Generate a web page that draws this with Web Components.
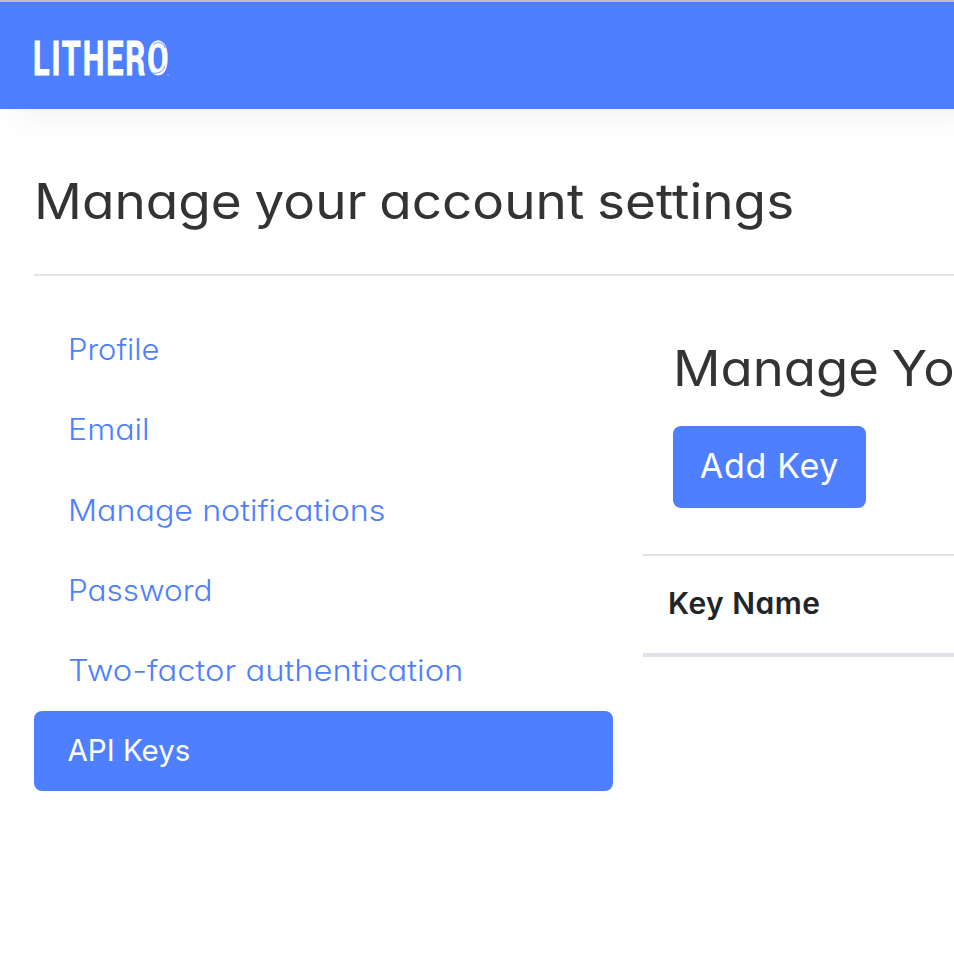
<!DOCTYPE html>
<html lang="en">
<head>
<meta charset="utf-8">
<title>Account settings</title>
<style>
	html, body{
		margin: 0;
		height: 100%;
		overflow: hidden;
		background: #fff;
	}
	body{
		font-family: Inter, "Open Sans", "Liberation Sans", sans-serif;
		font-feature-settings: "cv11", "ss03";
		color: #333;
		--brand: #4d7fff;
		--line: #dee2e6;
	}
</style>
</head>
<body>
<settings-page>
	<brand-header slot="header">LITHERO</brand-header>
	<page-title slot="title">Manage your account settings</page-title>
	<side-nav slot="nav">
		<nav-item style="--stretch: 1.05">Profile</nav-item>
		<nav-item style="--stretch: 1.09">Email</nav-item>
		<nav-item style="--stretch: 1.094">Manage notifications</nav-item>
		<nav-item style="--stretch: 1.067">Password</nav-item>
		<nav-item style="--stretch: 1.11">Two-factor authentication</nav-item>
		<nav-item active>API Keys</nav-item>
	</side-nav>
	<key-panel heading="Manage Yo">
		<add-button slot="action">Add Key</add-button>
		<key-table>Key Name</key-table>
	</key-panel>
</settings-page>

<script>
class BaseElement extends HTMLElement {

	constructor(){
		super();
		this.shadow = this.attachShadow({mode : 'open'});
	}

	connectedCallback(){
		this.shadow.innerHTML = this.render();
	}
}

class SettingsPage extends BaseElement {

	render(){
		return `
			<style>
				:host{
					display: flex;
					flex-direction: column;
					height: 100%;
				}
				.heading{
					margin-left: 34px;
					height: 165px;
					border-bottom: 2px solid #e4e4e4;
				}
				.columns{
					display: grid;
					grid-template-columns: 579px 1fr;
					column-gap: 30px;
					padding: 34px 0 0 34px;
				}
			</style>
			<slot name="header"></slot>
			<div class="heading"><slot name="title"></slot></div>
			<div class="columns">
				<slot name="nav"></slot>
				<slot></slot>
			</div>
		`;
	}
}

class BrandHeader extends BaseElement {

	render(){
		return `
			<style>
				:host{
					display: flex;
					align-items: flex-start;
					box-sizing: border-box;
					flex: none;
					height: 109px;
					padding: 27px 33px 0;
					border-top: 2px solid #bfbfbf;
					background: var(--brand);
					box-shadow: 16px 8px 32px rgba(0, 0, 0, 0.06);
				}
				.logo{
					position: relative;
					color: #fff;
					font-family: Roboto, sans-serif;
					font-weight: 700;
					font-size: 49px;
					line-height: 59px;
				}
				.word{
					display: block;
					letter-spacing: 3px;
					-webkit-text-stroke: 1px #fff;
					transform: scaleX(0.625);
					transform-origin: left;
				}
				svg{
					position: absolute;
					left: 111.5px;
					top: 7px;
				}
			</style>
			<div class="logo">
				<span class="word"><slot></slot></span>
				<!-- cuts in the ring of the O, and the mark at its foot -->
				<svg width="28" height="44" viewBox="0 0 28 44" fill="none" stroke="#4d7fff" stroke-width="0.8">
					<path d="M8 9c4-4 11-3 12 3"/>
					<path d="M7 37c6 1 11-1 13-7"/>
					<circle cx="23" cy="39" r="0.7" fill="#fff" stroke="none" opacity="0.6"/>
				</svg>
			</div>
		`;
	}
}

class PageTitle extends BaseElement {

	render(){
		return `
			<style>
				:host{
					display: block;
					padding-top: 63px;
					font-size: 49px;
					line-height: 60px;
					white-space: nowrap;
				}
				span{
					display: inline-block;
					transform: scaleX(1.083);
					transform-origin: left;
					word-spacing: -2px;
				}
			</style>
			<span><slot></slot></span>
		`;
	}
}

class SideNav extends BaseElement {

	render(){
		return `
			<style>
				:host{
					display: flex;
					flex-direction: column;
				}
			</style>
			<slot></slot>
		`;
	}
}

class NavItem extends BaseElement {

	render(){
		return `
			<style>
				:host{
					display: flex;
					align-items: center;
					box-sizing: border-box;
					height: 80.2px;
					padding: 0 33.5px 1.6px;
					border-radius: 8px;
					font-size: 29.5px;
					font-weight: 300;
					color: var(--brand);
					cursor: pointer;
				}
				:host([active]){
					background: var(--brand);
					color: #fff;
					font-weight: 400;
				}
				span{
					transform: scaleX(var(--stretch, 1));
					transform-origin: left;
				}
			</style>
			<span><slot></slot></span>
		`;
	}
}

class KeyPanel extends BaseElement {

	render(){
		return `
			<style>
				:host{
					display: block;
					min-width: 0;
				}
				.top{
					display: flex;
					flex-direction: column;
					align-items: flex-start;
					padding: 29px 0 46px 30px;
				}
				h2{
					margin: 0 0 27px;
					font-size: 49px;
					font-weight: 400;
					line-height: 60px;
					white-space: nowrap;
					transform: scaleX(1.073);
					transform-origin: left;
					word-spacing: -2px;
				}
			</style>
			<div class="top">
				<h2>${this.getAttribute('heading')}</h2>
				<slot name="action"></slot>
			</div>
			<slot></slot>
		`;
	}
}

class AddButton extends BaseElement {

	render(){
		return `
			<style>
				:host{
					display: block;
				}
				button{
					width: 193px;
					height: 82px;
					padding: 0 0 3px;
					border: 0;
					border-radius: 8px;
					background: var(--brand);
					color: #fff;
					font: inherit;
					font-feature-settings: inherit;
					font-size: 34px;
					letter-spacing: 0.7px;
					cursor: pointer;
				}
			</style>
			<button type="button"><slot></slot></button>
		`;
	}
}

class KeyTable extends BaseElement {

	render(){
		return `
			<style>
				:host{
					display: flex;
					align-items: center;
					box-sizing: border-box;
					height: 103px;
					padding: 0 0 3px 25px;
					border-top: 2px solid var(--line);
					border-bottom: 4px solid var(--line);
					font-size: 30px;
					font-weight: 600;
					letter-spacing: 0.5px;
					color: #212529;
				}
			</style>
			<span><slot></slot></span>
		`;
	}
}

window.customElements.define('settings-page', SettingsPage);
window.customElements.define('brand-header', BrandHeader);
window.customElements.define('page-title', PageTitle);
window.customElements.define('side-nav', SideNav);
window.customElements.define('nav-item', NavItem);
window.customElements.define('key-panel', KeyPanel);
window.customElements.define('add-button', AddButton);
window.customElements.define('key-table', KeyTable);
</script>
</body>
</html>
